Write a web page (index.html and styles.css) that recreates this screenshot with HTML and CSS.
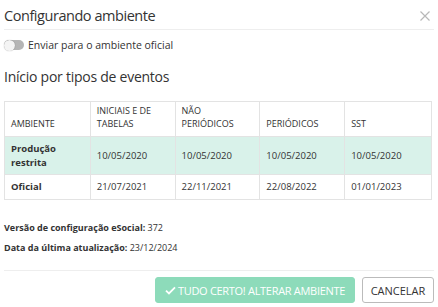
FILE: index.html
```html
<!DOCTYPE html>
<html lang="pt">
<head>
<meta charset="utf-8">
<link rel="stylesheet" href="styles.css">
</head>
<body>
<div class="modal">
  <div class="header">
    <h1 class="title">Configurando ambiente</h1>
    <svg class="close" viewBox="0 0 10 10" width="10" height="10"><path d="M0.5 0.5 L9.5 9.5 M9.5 0.5 L0.5 9.5" stroke="#b8b8b8" stroke-width="1.2" fill="none"/></svg>
  </div>
  <div class="body">
    <label class="toggle-row">
      <span class="toggle"><span class="knob"></span></span>
      <span class="toggle-label">Enviar para o ambiente oficial</span>
    </label>
    <h2 class="subtitle">Início por tipos de eventos</h2>
    <table class="grid">
      <colgroup>
        <col class="c1"><col class="c2"><col class="c3"><col class="c4"><col class="c5">
      </colgroup>
      <thead>
        <tr>
          <th>AMBIENTE</th>
          <th>INICIAIS E DE TABELAS</th>
          <th>NÃO PERIÓDICOS</th>
          <th>PERIÓDICOS</th>
          <th>SST</th>
        </tr>
      </thead>
      <tbody>
        <tr class="hl">
          <td class="name">Produção restrita</td>
          <td>10/05/2020</td>
          <td>10/05/2020</td>
          <td>10/05/2020</td>
          <td>10/05/2020</td>
        </tr>
        <tr>
          <td class="name">Oficial</td>
          <td>21/07/2021</td>
          <td>22/11/2021</td>
          <td>22/08/2022</td>
          <td>01/01/2023</td>
        </tr>
      </tbody>
    </table>
    <p class="info"><b>Versão de configuração eSocial:</b> 372</p>
    <p class="info"><b>Data da última atualização:</b> 23/12/2024</p>
  </div>
  <div class="footer">
    <button class="btn primary"><svg class="check" viewBox="0 0 12 10" width="11" height="9"><path d="M1 5.2 L4.3 8.3 L11 1.5" fill="none" stroke="#fff" stroke-width="2"/></svg>TUDO CERTO! ALTERAR AMBIENTE</button>
    <button class="btn secondary">CANCELAR</button>
  </div>
</div>
</body>
</html>
```
FILE: styles.css
```css
* { box-sizing: border-box; }
html, body { margin: 0; padding: 0; background: #fff; }
body { font-family: "Open Sans", "Noto Sans", sans-serif; color: #333; width: 438px; height: 307px; overflow: hidden; }
.modal { padding: 0 4px 0 4px; }
.header { display: flex; align-items: center; justify-content: space-between; height: 30px; border-bottom: 1px solid #eee; }
.title { margin: 0; font-size: 14.5px; font-weight: 400; color: #333; line-height: 20px; padding-top: 2px; letter-spacing: -0.45px; }
.close { margin-right: 4px; margin-top: 2px; }
.body { padding-top: 8px; }
.toggle-row { display: flex; align-items: center; gap: 4px; height: 14px; }
.toggle { width: 20px; height: 10px; border-radius: 5px; background: #b5b5b5; position: relative; }
.knob { position: absolute; left: 0; top: -0.5px; width: 11px; height: 11px; border-radius: 50%; background: #f4f4f4; box-shadow: 0 0 1px rgba(0,0,0,0.4); }
.toggle-label { font-size: 10.5px; color: #333; }
.subtitle { margin: 15px 0 0 0; font-size: 14px; font-weight: 400; color: #333; line-height: 20px; letter-spacing: -0.25px; }
.grid { margin-top: 14px; width: 428px; border-collapse: collapse; font-size: 9.5px; }
.c1 { width: 86px; } .c2 { width: 85px; } .c3 { width: 85px; } .c4 { width: 85px; } .c5 { width: 87px; }
.grid th, .grid td { border: 1px solid #e3e3e3; text-align: left; padding: 2px 6px; vertical-align: middle; }
.grid th { font-weight: 400; font-size: 9px; height: 35px; vertical-align: bottom; padding-bottom: 6px; line-height: 13px; }
.grid td { height: 25px; line-height: 14px; }
.grid tr.hl td { background: #d9f2ea; height: 38px; }
.grid td.name { font-weight: 700; }
.info { margin: 0; font-size: 9px; line-height: 12px; color: #333; }
.info:first-of-type { margin-top: 22px; }
.info + .info { margin-top: 8px; }
.footer { margin-top: 16px; border-top: 1px solid #eee; padding-top: 6px; display: flex; justify-content: flex-end; gap: 7px; }
.btn { font-family: "Open Sans", sans-serif; font-size: 11px; height: 26px; border-radius: 3px; padding: 0 8px; display: flex; align-items: center; gap: 2px; }
.primary { background: #8ddbba; color: #fff; border: 1px solid #8ddbba; width: 200px; justify-content: center; letter-spacing: -0.3px; }
.secondary { background: #fff; color: #333; border: 1px solid #bbb; width: 72px; justify-content: center; }
```
